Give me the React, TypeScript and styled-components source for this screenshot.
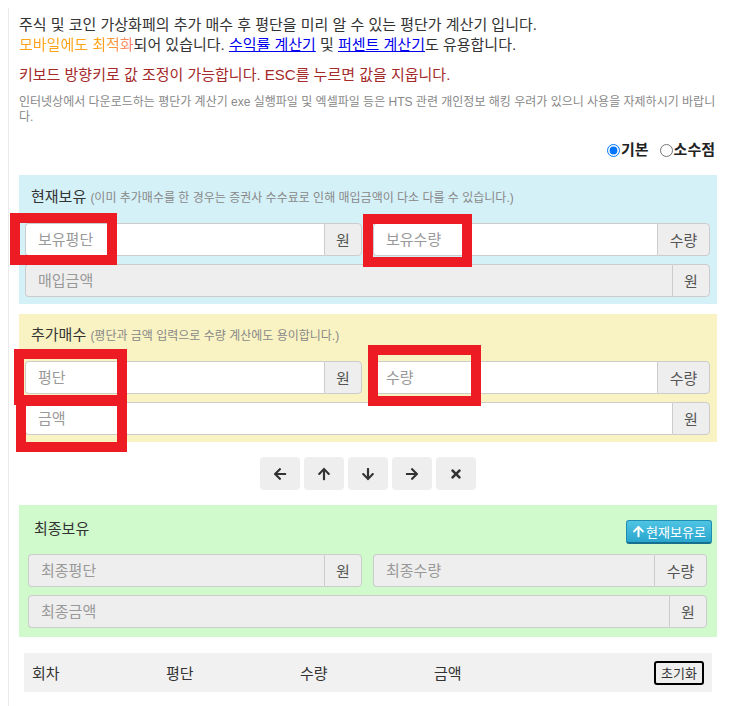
import React, { FC } from 'react';
import styled, { createGlobalStyle } from 'styled-components';
import { FaArrowLeft, FaArrowUp, FaArrowDown, FaArrowRight, FaTimes } from 'react-icons/fa';

const GlobalStyle = createGlobalStyle`
  body {
    margin: 8px;
    background: #fff;
    color: #333;
    font-family: "Liberation Sans", "Noto Sans CJK KR", sans-serif;
    font-size: 15px;
  }
  input, button {
    font-family: inherit;
  }
`;

const Page = styled.div`
  position: relative;
  width: 698px;
  min-height: 698px;
  padding: 7px 10px 0;
  border-left: 1px solid #eaeaea;
  border-right: 1px solid #eaeaea;
`;

const Intro = styled.p`
  margin: 0;
  line-height: 20px;
`;

const Gradient = styled.span`
  background: linear-gradient(to right, #ffa31a 0%, #ffa31a 72%, #f8807a 100%);
  -webkit-background-clip: text;
  background-clip: text;
  color: transparent;
`;

const Link = styled.a`
  color: #0000ee;
  text-decoration: underline;
`;

const Warn = styled.p`
  margin: 10px 0 0;
  line-height: 20px;
  color: #a52a2a;
`;

const Notice = styled.p`
  margin: 10px 0 0;
  font-size: 12px;
  line-height: 15px;
  color: #888;
`;

const ModeRow = styled.div`
  margin: 15px 2px 0 0;
  display: flex;
  justify-content: flex-end;
  gap: 11px;
  line-height: 20px;
  font-weight: bold;
`;

const ModeLabel = styled.label`
  display: flex;
  align-items: center;
  color: #222;
`;

const Radio = styled.input`
  margin: 0 1px 0 0;
  width: 13px;
  height: 13px;
`;

const Panel = styled.section<{ $bg: string; $pad?: string; $top?: number }>`
  background: ${(p) => p.$bg};
  padding: ${(p) => p.$pad || '12px 7px 7px 6px'};
  margin-top: ${(p) => p.$top ?? 0}px;
`;

const Title = styled.div<{ $gap?: number }>`
  margin: 0 0 ${(p) => p.$gap ?? 15}px 6px;
  line-height: 20px;
  font-weight: normal;
  color: #333;
`;

const Hint = styled.span`
  font-size: 12px;
  color: #888;
`;

const Rows = styled.div`
  display: grid;
  grid-template-columns: 1fr 1fr;
  column-gap: 11px;
  row-gap: 8px;
`;

const Group = styled.div<{ $full?: boolean }>`
  display: flex;
  height: 33px;
  grid-column: ${(p) => (p.$full ? '1 / 3' : 'auto')};
`;

const Field = styled.input`
  flex: 1;
  min-width: 0;
  height: 33px;
  box-sizing: border-box;
  padding: 0 12px;
  border: 1px solid #ccc;
  border-right: none;
  border-radius: 4px 0 0 4px;
  background: #fff;
  font-size: 15px;
  color: #333;
  outline: none;
  &:disabled {
    background: #eee;
  }
  &::placeholder {
    color: #999;
  }
`;

const Addon = styled.span<{ $w: number }>`
  width: ${(p) => p.$w}px;
  height: 33px;
  box-sizing: border-box;
  display: flex;
  align-items: center;
  justify-content: center;
  background: #eee;
  border: 1px solid #ccc;
  border-radius: 0 4px 4px 0;
  color: #555;
`;

const ArrowBar = styled.div`
  display: flex;
  justify-content: center;
  gap: 4px;
  margin-top: 15px;
`;

const ArrowButton = styled.button`
  width: 40px;
  height: 33px;
  border: none;
  border-radius: 4px;
  background: #eee;
  color: #333;
  display: flex;
  align-items: center;
  justify-content: center;
  padding: 0;
  font-size: 14px;
`;

const FinalHead = styled.div`
  display: flex;
  align-items: center;
  justify-content: space-between;
  height: 24px;
  margin: 0 -5px 10px 0;
`;

const FinalTitle = styled.div`
  margin-left: 6px;
  margin-top: -6px;
  line-height: 20px;
`;

const InfoButton = styled.button`
  height: 24px;
  width: 86px;
  padding: 0 3px;
  display: flex;
  align-items: center;
  justify-content: center;
  gap: 1px;
  white-space: nowrap;
  border: 1px solid #1f8db0;
  border-bottom: 2px solid #166f8c;
  border-radius: 3px;
  background: linear-gradient(#4fc4e4, #2aa6cd);
  color: #fff;
  font-size: 13px;
  svg {
    font-size: 13px;
    flex: none;
  }
`;

const History = styled.div`
  margin: 16px 5px 0;
  height: 39px;
  background: #f1f1f1;
  display: grid;
  grid-template-columns: 134px 134px 134px 1fr auto;
  align-items: center;
  padding: 0 8px;
`;

const HistoryCell = styled.span`
  color: #333;
`;

const ResetButton = styled.button`
  width: 50px;
  height: 24px;
  padding: 0;
  border: 2px solid #000;
  border-radius: 3px;
  background: #efefef;
  font-size: 13px;
  color: #333;
`;

const Mark = styled.div`
  position: absolute;
  box-sizing: border-box;
  border: 10px solid #ed1c24;
  pointer-events: none;
`;

type Box = { x: number; y: number; w: number; h: number };

// red annotation boxes, page coordinates
const MARKS: Box[] = [
  { x: 10, y: 213, w: 107, h: 52 },
  { x: 363, y: 214, w: 109, h: 53 },
  { x: 14, y: 349, w: 113, h: 56 },
  { x: 16, y: 396, w: 111, h: 56 },
  { x: 368, y: 345, w: 113, h: 61 },
];

const InputGroup: FC<{ placeholder: string; unit: string; disabled?: boolean; full?: boolean }> = ({
  placeholder,
  unit,
  disabled,
  full,
}) => (
  <Group $full={full}>
    <Field placeholder={placeholder} disabled={disabled} />
    <Addon $w={unit === '원' ? 38 : 53}>{unit}</Addon>
  </Group>
);

export default function App() {
  return (
    <>
      <GlobalStyle />
      <Page>
        <Intro>
          주식 및 코인 가상화페의 추가 매수 후 평단을 미리 알 수 있는 평단가 계산기 입니다.
          <br />
          <Gradient>모바일에도 최적화</Gradient>되어 있습니다. <Link href="#">수익률 계산기</Link> 및{' '}
          <Link href="#">퍼센트 계산기</Link>도 유용합니다.
        </Intro>
        <Warn>키보드 방향키로 값 조정이 가능합니다. ESC를 누르면 값을 지웁니다.</Warn>
        <Notice>
          인터넷상에서 다운로드하는 평단가 계산기 exe 실행파일 및 엑셀파일 등은 HTS 관련 개인정보 해킹 우려가 있으니 사용을
          자제하시기 바랍니다.
        </Notice>
        <ModeRow>
          <ModeLabel>
            <Radio type="radio" name="mode" defaultChecked />
            기본
          </ModeLabel>
          <ModeLabel>
            <Radio type="radio" name="mode" />
            소수점
          </ModeLabel>
        </ModeRow>

        <Panel $bg="#d5f1f8" $top={15}>
          <Title $gap={15}>
            현재보유 <Hint>(이미 추가매수를 한 경우는 증권사 수수료로 인해 매입금액이 다소 다를 수 있습니다.)</Hint>
          </Title>
          <Rows>
            <InputGroup placeholder="보유평단" unit="원" />
            <InputGroup placeholder="보유수량" unit="수량" />
            <InputGroup placeholder="매입금액" unit="원" disabled full />
          </Rows>
        </Panel>
        <Panel $bg="#f9f3c3" $top={10} $pad="11px 7px 7px 6px">
          <Title $gap={15}>
            추가매수 <Hint>(평단과 금액 입력으로 수량 계산에도 용이합니다.)</Hint>
          </Title>
          <Rows>
            <InputGroup placeholder="평단" unit="원" />
            <InputGroup placeholder="수량" unit="수량" />
            <InputGroup placeholder="금액" unit="원" full />
          </Rows>
        </Panel>

        <ArrowBar>
          <ArrowButton>
            <FaArrowLeft />
          </ArrowButton>
          <ArrowButton>
            <FaArrowUp />
          </ArrowButton>
          <ArrowButton>
            <FaArrowDown />
          </ArrowButton>
          <ArrowButton>
            <FaArrowRight />
          </ArrowButton>
          <ArrowButton>
            <FaTimes />
          </ArrowButton>
        </ArrowBar>

        <Panel $bg="#d0f9cc" $pad="15px 10px 9px 9px" $top={15}>
          <FinalHead>
            <FinalTitle>최종보유</FinalTitle>
            <InfoButton>
              <FaArrowUp />
              현재보유로
            </InfoButton>
          </FinalHead>
          <Rows>
            <InputGroup placeholder="최종평단" unit="원" disabled />
            <InputGroup placeholder="최종수량" unit="수량" disabled />
            <InputGroup placeholder="최종금액" unit="원" disabled full />
          </Rows>
        </Panel>

        <History>
          <HistoryCell>회차</HistoryCell>
          <HistoryCell>평단</HistoryCell>
          <HistoryCell>수량</HistoryCell>
          <HistoryCell>금액</HistoryCell>
          <ResetButton>초기화</ResetButton>
        </History>

        {MARKS.map((m, i) => (
          <Mark key={i} style={{ left: m.x - 9, top: m.y - 8, width: m.w, height: m.h }} />
        ))}
      </Page>
    </>
  );
}
